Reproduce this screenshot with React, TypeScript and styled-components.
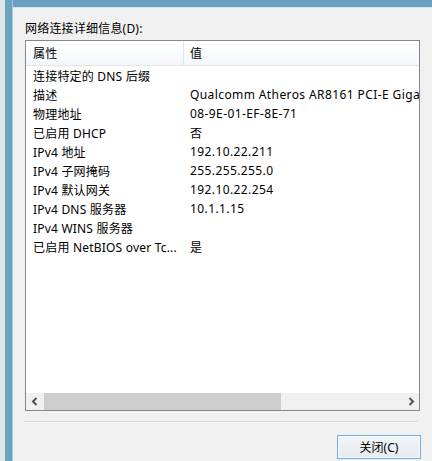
import React from "react";
import styled, { createGlobalStyle } from "styled-components";

const Global = createGlobalStyle`
  html, body { margin: 0; padding: 0; background: #f0f0f0; }
  body {
    font-family: "Noto Sans", "Noto Sans CJK SC", sans-serif;
    font-size: 12px;
    letter-spacing: 0.2px;
    color: #000;
  }
`;

const Frame = styled.div`
  display: flex;
  width: 432px;
  height: 461px;
  overflow: hidden;
  background: #f0f0f0;
`;

const OuterStrip = styled.div`
  width: 5px;
  flex: none;
  background: #dfe6e9;
`;

const SideBorder = styled.div`
  width: 7px;
  flex: none;
  background: #6ba5bb;
  border-right: 1px solid #a9cbd8;
`;

const Main = styled.div`
  flex: 1;
  display: flex;
  flex-direction: column;
  min-width: 0;
`;

const TopBorder = styled.div`
  height: 7px;
  flex: none;
  background: #6b9fc1;
  border-bottom: 1px solid #d5e3ec;
`;

const Content = styled.div`
  display: flex;
  flex-direction: column;
  padding: 13px 0 0 12px;
`;

const Label = styled.div`
  line-height: 16px;
  height: 16px;
  margin-bottom: 3px;
`;

const ListBox = styled.div`
  width: 393px;
  height: 369px;
  border: 1px solid #828790;
  background: #fff;
  display: flex;
  flex-direction: column;
  overflow: hidden;
`;

const Grid = styled.div`
  display: grid;
  grid-template-columns: 157px 1fr;
`;

const HeaderRow = styled(Grid)`
  height: 24px;
  background: linear-gradient(#ffffff, #f3f7fb);
  border-bottom: 1px solid #e5e5e5;
`;

const HeaderCell = styled.div<{ $divider?: boolean }>`
  display: flex;
  align-items: center;
  padding-left: ${(p) => (p.$divider ? 6 : 7)}px;
  border-left: ${(p) => (p.$divider ? "1px solid #e5e5e5" : "none")};
`;

const Rows = styled.div`
  flex: 1;
  display: flex;
  flex-direction: column;
`;

const Row = styled(Grid)`
  height: 19px;
  align-items: center;
`;

const Cell = styled.div<{ $value?: boolean }>`
  padding-left: 7px;
  white-space: nowrap;
  overflow: hidden;
  letter-spacing: ${(p) => (p.$value ? "0.4px" : "0.2px")};
`;

const ScrollBar = styled.div`
  height: 17px;
  display: flex;
  background: #f0f0f0;
`;

const ArrowButton = styled.div`
  width: 17px;
  flex: none;
  display: flex;
  align-items: center;
  justify-content: center;
  background: #f0f0f0;
`;

const Track = styled.div`
  flex: 1;
  display: flex;
  padding-left: 1px;
`;

const Thumb = styled.div`
  background: #cdcdcd;
  height: 17px;
`;

const Separator = styled.div`
  width: 394px;
  height: 1px;
  margin: 10px 0 0 -1px;
  background: #d6d6d6;
  border-bottom: 1px solid #fbfbfb;
`;

const ButtonRow = styled.div`
  display: flex;
  justify-content: flex-end;
  padding: 12px 11px 0 0;
`;

const Button = styled.button`
  width: 84px;
  height: 24px;
  border: 1px solid #70aee6;
  background: linear-gradient(#f1f4f7, #e6ebf0);
  box-shadow: inset 0 0 0 1px #f7fbff;
  font: inherit;
  color: #000;
  padding: 0;
`;

const Chevron = ({ dir }: { dir: "left" | "right" }) => (
  <svg width="8" height="9" viewBox="0 0 8 9">
    <path
      d={dir === "left" ? "M5.5 1 L2 4.5 L5.5 8" : "M2.5 1 L6 4.5 L2.5 8"}
      fill="none"
      stroke="#505050"
      strokeWidth="2"
    />
  </svg>
);

const rows: [string, string][] = [
  ["连接特定的 DNS 后缀", ""],
  ["描述", "Qualcomm Atheros AR8161 PCI-E Gigabit Ethernet Controller (NDIS 6.30)"],
  ["物理地址", "08-9E-01-EF-8E-71"],
  ["已启用 DHCP", "否"],
  ["IPv4 地址", "192.10.22.211"],
  ["IPv4 子网掩码", "255.255.255.0"],
  ["IPv4 默认网关", "192.10.22.254"],
  ["IPv4 DNS 服务器", "10.1.1.15"],
  ["IPv4 WINS 服务器", ""],
  ["已启用 NetBIOS over Tc...", "是"],
];

export default function App() {
  return (
    <>
      <Global />
      <Frame>
        <OuterStrip />
        <SideBorder />
        <Main>
          <TopBorder />
          <Content>
            <Label>网络连接详细信息(D):</Label>
            <ListBox>
              <HeaderRow>
                <HeaderCell>属性</HeaderCell>
                <HeaderCell $divider>值</HeaderCell>
              </HeaderRow>
              <Rows>
                {rows.map(([k, v]) => (
                  <Row key={k}>
                    <Cell>{k}</Cell>
                    <Cell $value>{v}</Cell>
                  </Row>
                ))}
              </Rows>
              <ScrollBar>
                <ArrowButton>
                  <Chevron dir="left" />
                </ArrowButton>
                <Track>
                  <Thumb style={{ width: 237 }} />
                </Track>
                <ArrowButton>
                  <Chevron dir="right" />
                </ArrowButton>
              </ScrollBar>
            </ListBox>
            <Separator />
            <ButtonRow>
              <Button>关闭(C)</Button>
            </ButtonRow>
          </Content>
        </Main>
      </Frame>
    </>
  );
}
